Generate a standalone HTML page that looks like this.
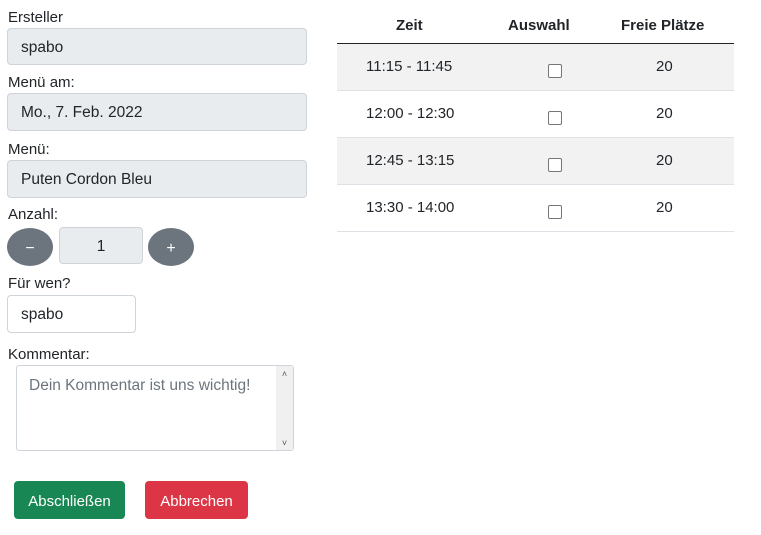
<!DOCTYPE html><html><head><style>
body{margin:0;width:761px;height:535px;background:#fff;font-family:"Liberation Sans",sans-serif;font-size:15px;color:#212529;position:relative;overflow:hidden}
.a{position:absolute}
.lbl{position:absolute;left:8px;font-size:15px;margin-top:1px}
.in{position:absolute;box-sizing:border-box;border:1px solid #ced4da;border-radius:4px;background:#e9ecef;padding-left:13px;padding-top:2px;display:flex;align-items:center;font-size:15.5px}
.btn{position:absolute;color:#fff;border-radius:4px;display:flex;align-items:center;justify-content:center;font-size:15px;padding-top:2px;box-sizing:border-box}
.pm{position:absolute;background:#6c757d;border-radius:50%;color:#fff;display:flex;align-items:center;justify-content:center;font-size:16px;padding-top:3px;box-sizing:border-box}
.row{position:absolute;left:337px;width:397px;height:46px;border-bottom:1px solid #dee2e6}
.row span{position:absolute;top:14px}
.cb{position:absolute;left:211px;top:20px;width:12px;height:12px;border:1px solid #767676;border-radius:2px;background:#fff}
</style></head><body>
<div class="lbl" style="top:8px">Ersteller</div>
<div class="in" style="left:7px;top:28px;width:300px;height:37px">spabo</div>
<div class="lbl" style="top:73px">Menü am:</div>
<div class="in" style="left:7px;top:93px;width:300px;height:38px">Mo., 7. Feb. 2022</div>
<div class="lbl" style="top:140px">Menü:</div>
<div class="in" style="left:7px;top:160px;width:300px;height:38px">Puten Cordon Bleu</div>
<div class="lbl" style="top:205px">Anzahl:</div>
<div class="pm" style="left:7px;top:228px;width:46px;height:38px">−</div>
<div class="in" style="left:59px;top:227px;width:84px;height:37px;justify-content:center;padding:2px 0 0 0">1</div>
<div class="pm" style="left:148px;top:228px;width:46px;height:38px">+</div>
<div class="lbl" style="top:274px">Für wen?</div>
<div class="in" style="left:7px;top:295px;width:129px;height:38px;background:#fff">spabo</div>
<div class="lbl" style="top:345px">Kommentar:</div>
<div class="a" style="left:16px;top:365px;width:278px;height:86px;box-sizing:border-box;border:1px solid #ced4da;border-radius:3px;background:#fff">
<div class="a" style="left:12px;top:11px;color:#6c757d;font-size:15.5px">Dein Kommentar ist uns wichtig!</div>
<div class="a" style="right:0;top:0;width:17px;height:84px;background:#f0f0f0;font-size:9px;color:#555;text-align:center"><div style="margin-top:3px">&#x2C4;</div><div style="position:absolute;bottom:2px;width:17px">&#x2C5;</div></div>
</div>
<div class="btn" style="left:14px;top:481px;width:111px;height:38px;background:#198754">Abschließen</div>
<div class="btn" style="left:145px;top:481px;width:103px;height:38px;background:#dc3545">Abbrechen</div>

<div class="a" style="left:337px;top:16px;width:397px;height:27px;border-bottom:1px solid #212529;font-weight:bold">
<span class="a" style="left:59px;top:1px">Zeit</span><span class="a" style="left:171px;top:1px">Auswahl</span><span class="a" style="left:284px;top:1px">Freie Plätze</span></div>
<div class="row" style="top:44px;background:#f2f2f2"><span style="left:29px">11:15 - 11:45</span><div class="cb"></div><span style="left:319px">20</span></div>
<div class="row" style="top:91px"><span style="left:29px">12:00 - 12:30</span><div class="cb"></div><span style="left:319px">20</span></div>
<div class="row" style="top:138px;background:#f2f2f2"><span style="left:29px">12:45 - 13:15</span><div class="cb"></div><span style="left:319px">20</span></div>
<div class="row" style="top:185px"><span style="left:29px">13:30 - 14:00</span><div class="cb"></div><span style="left:319px">20</span></div>
</body></html>
